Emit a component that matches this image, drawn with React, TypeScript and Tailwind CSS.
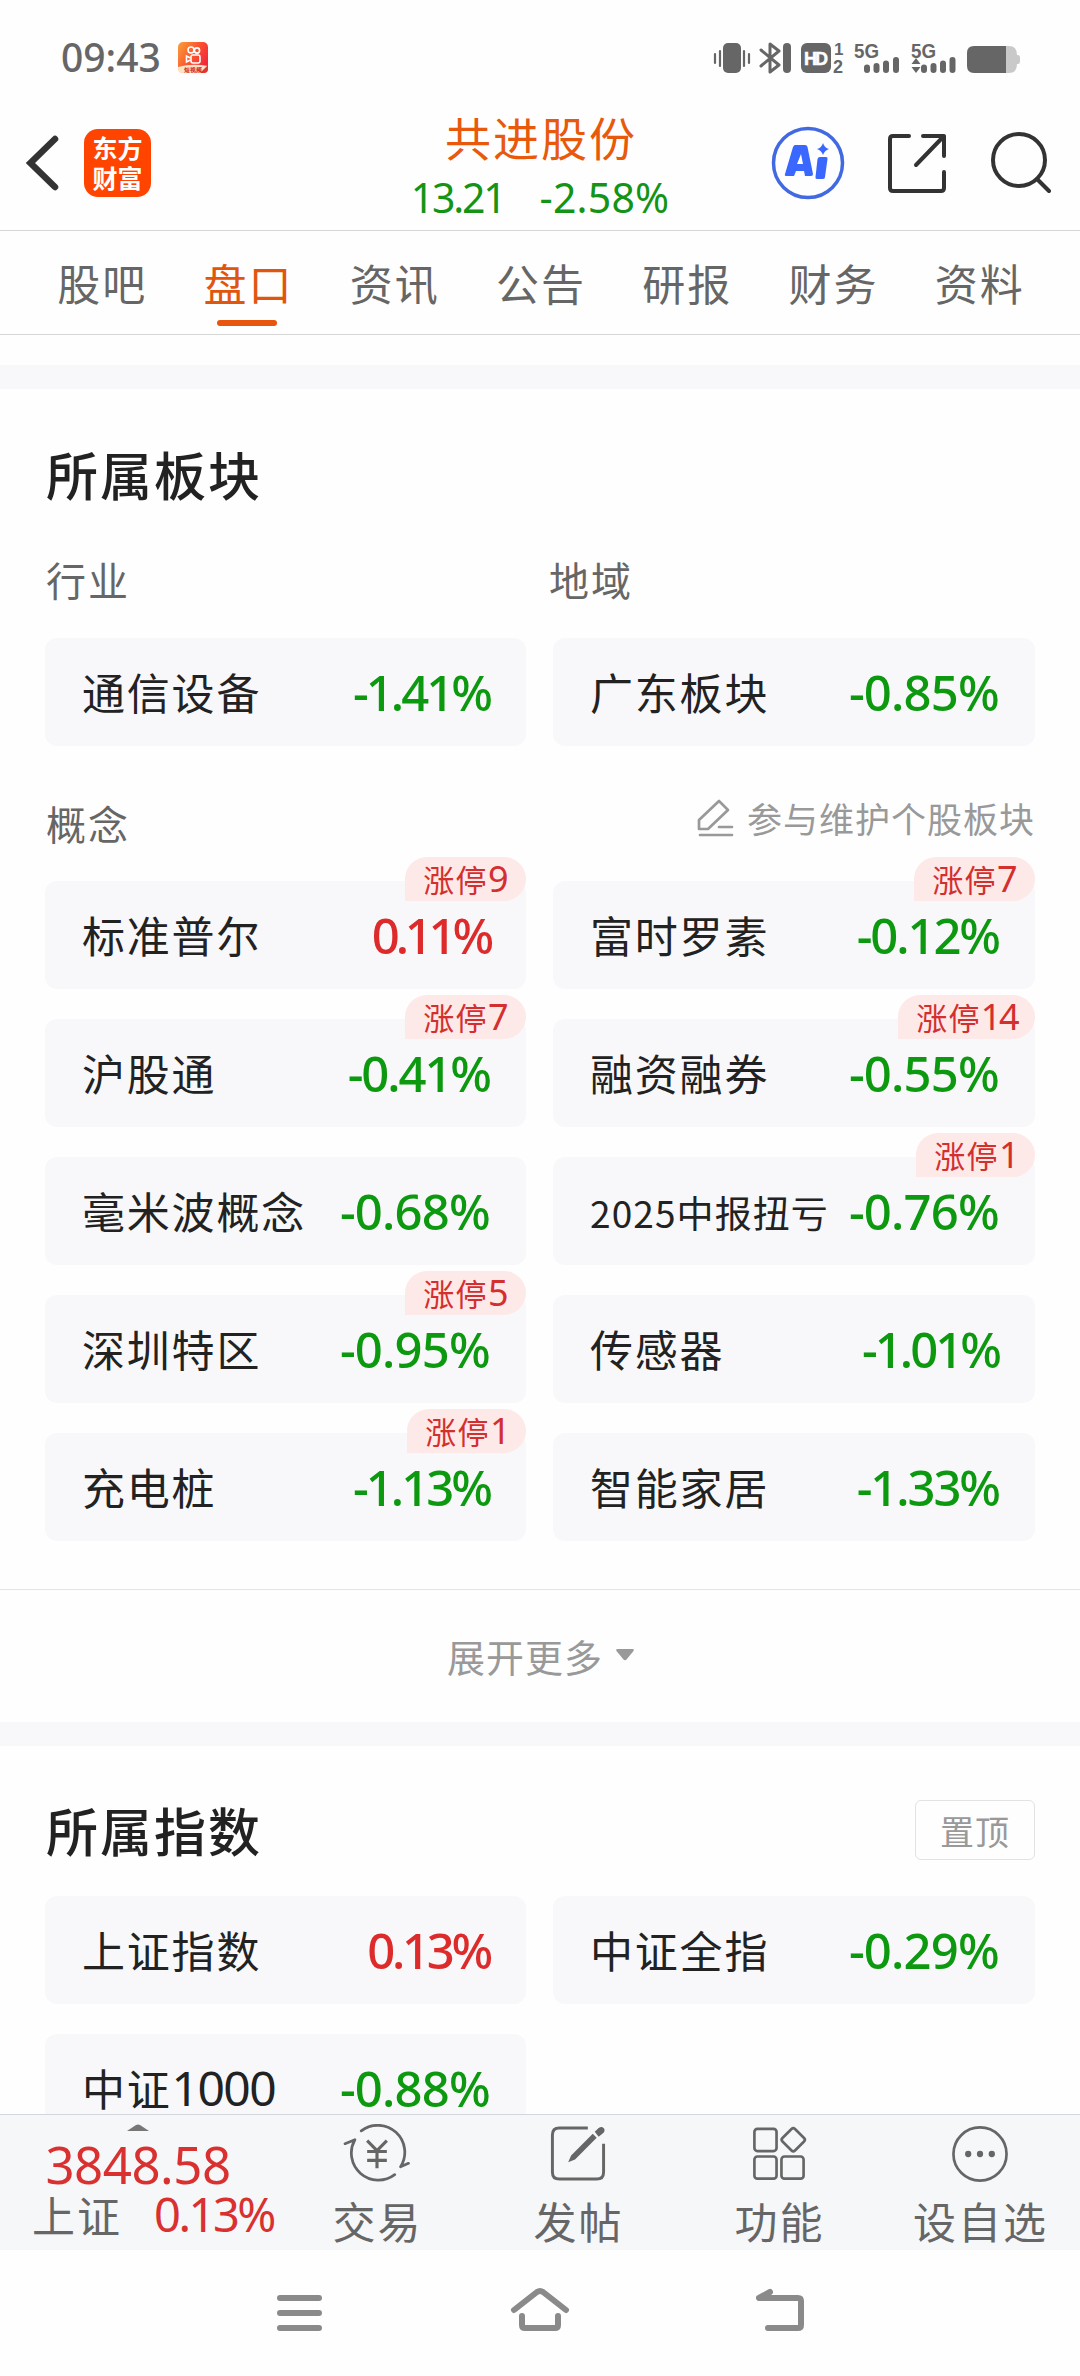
import type { ReactNode } from "react";

type Board = { name: ReactNode; value: string; badge?: string };

const industry: Board[] = [
  { name: "通信设备", value: "-1.41%" },
  { name: "广东板块", value: "-0.85%" },
];

const concepts: Board[] = [
  { name: "标准普尔", value: "0.11%", badge: "9" },
  { name: "富时罗素", value: "-0.12%", badge: "7" },
  { name: "沪股通", value: "-0.41%", badge: "7" },
  { name: "融资融券", value: "-0.55%", badge: "14" },
  { name: "毫米波概念", value: "-0.68%" },
  { name: <span className="text-[37px] tracking-[1.1px]">2025中报扭亏</span>, value: "-0.76%", badge: "1" },
  { name: "深圳特区", value: "-0.95%", badge: "5" },
  { name: "传感器", value: "-1.01%" },
  { name: "充电桩", value: "-1.13%", badge: "1" },
  { name: "智能家居", value: "-1.33%" },
];

const indexes: Board[] = [
  { name: "上证指数", value: "0.13%" },
  { name: "中证全指", value: "-0.29%" },
  { name: <>中证<span className="font-['Noto_Sans'] text-[48px] tracking-[-1.6px]">1000</span></>, value: "-0.88%" },
];

const tabs = ["股吧", "盘口", "资讯", "公告", "研报", "财务", "资料"];

// the figure 1 is narrow, so values with more of them are set tighter
const downTracking = ["tracking-[-0.8px]", "tracking-[-2.1px]", "tracking-[-3px]"];
const upTracking = ["tracking-[-1px]", "tracking-[-3.3px]", "tracking-[-4.2px]"];

export default function App() {
  return (
    <div className="flex h-[2376px] w-[1080px] flex-col overflow-hidden bg-[#fefefe] font-['Noto_Sans_CJK_SC',sans-serif] text-[#222]">
      <StatusBar />
      <Header />
      <nav className="flex h-[105px] shrink-0 border-y border-[#d6d6d6] px-7">
        {tabs.map((t) => (
          <Tab key={t} label={t} active={t === "盘口"} />
        ))}
      </nav>

      <main className="h-[1779px] shrink-0 overflow-hidden pt-[30px]">
        <div className="h-6 bg-[#f8f8fa]" />
        <section className="px-[45px]">
          <h2 className="flex h-[169px] items-center pl-[1px] text-[52px] leading-[60px] font-medium tracking-[2px]">所属板块</h2>
          <div className="grid h-[80px] grid-cols-[503px_1fr] pt-[2px] pl-[1px] text-[40px] leading-[38px] tracking-[2px] text-[#666]">
            <span>行业</span>
            <span>地域</span>
          </div>
          <BoardGrid items={industry} />
          <div className="flex h-[135px] items-center justify-between">
            <span className="pt-[19px] pl-[1px] text-[40px] tracking-[2px] text-[#666]">概念</span>
            <span className="flex items-center gap-[13px] pt-[9px] text-[35px] tracking-[1px] text-[#999]">
              <EditIcon />
              参与维护个股板块
            </span>
          </div>
          <BoardGrid items={concepts} />
        </section>
        <button className="mt-12 flex h-[133px] w-full items-center justify-center gap-3 border-t border-[#e4e4e4] pb-[2px] pl-[2px] text-[38px] tracking-[1px] text-[#999]">
          展开更多
          <svg width="20" height="14" viewBox="0 0 20 14">
            <path d="M2.5 1h15q2 0 1 2l-7 8.500q-1.500 1.500-3 0l-7-8.500q-1-2 1-2z" fill="#999" />
          </svg>
        </button>
        <div className="h-6 bg-[#f8f8fa]" />
        <section className="px-[45px]">
          <div className="flex h-[150px] items-center justify-between">
            <h2 className="pt-[18px] pl-[1px] text-[52px] font-medium tracking-[2px]">所属指数</h2>
            <span className="mt-[18px] flex h-[60px] w-[120px] items-center justify-center rounded-[6px] border border-[#e2e2e2] text-[34px] tracking-[1px] text-[#999]">
              置顶
            </span>
          </div>
          <BoardGrid items={indexes} />
        </section>
      </main>

      <BottomBar />
      <SystemNav />
    </div>
  );
}

function Tab({ label, active }: { label: string; active: boolean }) {
  return (
    <div className={`flex flex-1 flex-col items-center text-[43px] leading-[60px] tracking-[2px] ${active ? "text-[#e0560f]" : "text-[#666]"}`}>
      <span className="mt-[21px] pl-[2px]">{label}</span>
      {active && <span className="mt-2 h-1.5 w-[60px] rounded-full bg-[#e8550c]" />}
    </div>
  );
}

function BoardGrid({ items }: { items: Board[] }) {
  return (
    <div className="grid grid-cols-[481px_482px] gap-x-[27px] gap-y-[30px]">
      {items.map((b, i) => (
        <BoardCard key={i} board={b} />
      ))}
    </div>
  );
}

function BoardCard({ board }: { board: Board }) {
  const ones = board.value.split("1").length - 1;
  const down = board.value.startsWith("-");
  const style = down ? `text-[#0c990f] ${downTracking[ones]}` : `text-[#dd2b2b] ${upTracking[ones]}`;
  return (
    <div className="relative flex h-[108px] items-center justify-between rounded-xl bg-[#f8f8fa] pr-[36px] pl-[37px]">
      <span className="pb-[2px] text-[43px] leading-[60px] tracking-[1.8px] whitespace-nowrap">{board.name}</span>
      <span className={`font-['Noto_Sans'] text-[49px] leading-[60px] font-medium whitespace-nowrap ${style}`}>{board.value}</span>
      {board.badge && (
        <span className="absolute -top-6 right-0 flex h-11 items-center rounded-[22px] rounded-bl-none bg-[#fde9e8] px-[18px] text-[31px] tracking-[1.3px] text-[#d42f2f]">
          涨停
          <span className={`font-['Noto_Sans'] text-[36px] ${board.badge.includes("1") ? "tracking-[-2.5px]" : "tracking-[-0.5px]"}`}>
            {board.badge}
          </span>
        </span>
      )}
    </div>
  );
}

function StatusBar() {
  return (
    <div className="flex h-[115px] shrink-0 items-center justify-between pr-[60px] pl-[61px]">
      <div className="flex items-center gap-[17px] font-['Noto_Sans'] text-[39px] font-medium text-[#666]">
        09:43
        <svg width="30" height="31" viewBox="0 0 30 31">
          <defs>
            <linearGradient id="ks" x1="0" y1="0" x2="1" y2="0.6">
              <stop offset="0" stopColor="#f9a03a" />
              <stop offset="0.6" stopColor="#f9502f" />
              <stop offset="1" stopColor="#f5263c" />
            </linearGradient>
          </defs>
          <rect width="30" height="31" rx="5" fill="url(#ks)" />
          <path d="M0 25q14-4 30-1l-5 7H5q-5 0-5-5z" fill="#fde3c8" />
          <g fill="none" stroke="#fff" strokeWidth="1.600">
            <circle cx="13" cy="8" r="3" />
            <circle cx="19" cy="8.500" r="2.600" />
            <rect x="13" y="13" width="9" height="8" rx="2" />
            <path d="M12.500 16l-4-2v6l4-2" />
          </g>
          <path d="M30 23l-8 8h4q4 0 4-4z" fill="#e8352c" />
          <text x="15" y="30" textAnchor="middle" fontSize="6" fontWeight="700" fill="#d02a20">短视频</text>
        </svg>
      </div>
      <svg width="306" height="32" viewBox="714 42 306 32" fill="#666" className="overflow-visible font-['Liberation_Sans']">
        <rect x="723" y="43" width="18" height="30" rx="5" />
        <path d="M715 54v9M720 51v15M744 51v15M749 54v9" stroke="#666" strokeWidth="2.200" strokeLinecap="round" />
        <path d="M761 50l18 15-9 7V44l9 7-18 15" fill="none" stroke="#666" strokeWidth="3" strokeLinejoin="round" strokeLinecap="round" />
        <rect x="783" y="43" width="8" height="30" rx="4" />
        <rect x="801" y="43" width="30" height="30" rx="6" />
        <text x="816" y="64.500" textAnchor="middle" fontSize="18" fontWeight="700" fill="#fff" stroke="#fff" strokeWidth="0.5" textLength="24">HD</text>
        <text x="834" y="55" fontSize="17" fontWeight="700">1</text>
        <text x="833" y="73" fontSize="18" fontWeight="700">2</text>
        <text x="854" y="57.500" fontSize="20" fontWeight="700" textLength="25" lengthAdjust="spacingAndGlyphs">5G</text>
        <path d="M867 67.500v2.500M876.500 66v4M886 63.500v6.500M896 60v10" stroke="#666" strokeWidth="6" strokeLinecap="round" />
        <text x="911" y="57.500" fontSize="20" fontWeight="700" textLength="25" lengthAdjust="spacingAndGlyphs">5G</text>
        <path d="M911.500 64l4.500-6 4.500 6zM911.500 67l4.500 6 4.500-6z" />
        <path d="M924 67.500v2.500M933.500 66v4M943 63.500v6.500M952.500 60v10" stroke="#666" strokeWidth="6" strokeLinecap="round" />
        <path d="M1006 46h3q8 0 8 9h1q2 0 2 2.500v4q0 2.500-2 2.500h-1q0 9-8 9h-3z" fill="#c9c9c9" />
        <path d="M974 46h32v27h-32q-7 0-7-7V53q0-7 7-7z" />
      </svg>
    </div>
  );
}

function Header() {
  return (
    <header className="grid h-[115px] shrink-0 grid-cols-[1fr_300px_1fr]">
      <div className="flex items-start pt-[14px] pl-[26px]">
        <svg width="34" height="68" viewBox="0 0 34 68" fill="none" stroke="#333" strokeWidth="6.500" strokeLinecap="round">
          <path d="M29 10L4.500 34 29 58" />
        </svg>
        <div className="ml-6 flex h-[68px] w-[67px] flex-col items-center justify-center rounded-[14px] bg-[#ff4400] pb-[2px] text-[25px] leading-[30px] font-bold text-white">
          <span>东方</span>
          <span>财富</span>
        </div>
      </div>
      <div className="flex flex-col items-center">
        <h1 className="-mt-1 pl-[2px] text-[46px] leading-[50px] tracking-[2px] whitespace-nowrap text-[#e8590c]">共进股份</h1>
        <div className="mt-1 flex gap-[35px] font-['Noto_Sans'] text-[41px] leading-[64px] text-[#149414]">
          <span className="tracking-[-2.200px]">13.21</span>
          <span className="tracking-[0.200px]">-2.58%</span>
        </div>
      </div>
      <div className="flex justify-end gap-[42px] pt-[11px] pr-[29px]">
        <svg width="74" height="74" viewBox="0 0 74 74" className="shrink-0">
          <circle cx="37" cy="37" r="34.500" fill="none" stroke="#4169e1" strokeWidth="3.500" />
          <path d="M24 19h10q2 0 2.500 2L42 48q0 2-2 2h-6l-1-5h-8l-2 5h-7q-3 0-2-2l8-27q1-2 2-2zM30 28l-4 10h6z" fill="#3a68ff" fillRule="evenodd" />
          <path d="M49 31h6q2 0 1.500 2L54 51q0 2-2 2h-6q-2 0-1.500-2l2-18q.5-2 2.500-2z" fill="#3a68ff" />
          <path d="M52 17q1.500 5 6 6-4.500 1.500-6 6-1.500-4.500-6-6 4.500-1 6-6z" fill="#3a68ff" />
        </svg>
        <svg width="60" height="74" viewBox="0 0 60 74" className="shrink-0" fill="none" stroke="#333" strokeWidth="4" strokeLinecap="round" strokeLinejoin="round">
          <path d="M22 10H6q-3 0-3 3v49q0 3 3 3h48q3 0 3-3V46M36 10h21v20M57 10L29 39" />
        </svg>
        <svg width="62" height="74" viewBox="0 0 62 74" className="shrink-0" fill="none" stroke="#333" strokeWidth="4" strokeLinecap="round">
          <circle cx="30" cy="34" r="26" />
          <path d="M48 53l12 12" />
        </svg>
      </div>
    </header>
  );
}

function EditIcon() {
  return (
    <svg width="37" height="38" viewBox="0 0 37 38" fill="none" stroke="#999" strokeWidth="2.700" strokeLinecap="round" strokeLinejoin="round">
      <path d="M2 30V21L22 2l9 9-20 19zM22 28h13M3 36h32" />
    </svg>
  );
}

function BottomBar() {
  return (
    <footer className="flex h-[136px] shrink-0 border-t border-[#d3d6dc] bg-[#f6f7f9] text-[#666]">
      <div className="flex w-[276px] flex-col items-center">
        <svg width="22" height="7" viewBox="0 0 22 7" className="mt-[9px]">
          <path d="M0 7l9-6q2-1 4 0l9 6z" fill="#777" />
        </svg>
        <span className="mt-[6px] font-['Noto_Sans'] text-[51px] leading-[55px] tracking-[-0.500px] text-[#d93030]">3848.58</span>
        <div className="flex items-center gap-[32px] pl-[30px] text-[43px] leading-[44px] tracking-[2px] whitespace-nowrap">
          上证
          <span className="font-['Noto_Sans'] text-[47px] tracking-[-2.500px] text-[#d93030]">0.13%</span>
        </div>
      </div>
      <BarItem label="交易">
        <g fill="none" stroke="#666" strokeWidth="2.800" strokeLinecap="round" strokeLinejoin="round">
          <path d="M18 7A27.500 27.500 0 0 1 58 43.500L66 40M52 51.500A27.500 27.500 0 0 1 11.500 16L1.500 20" />
          <path d="M24 17l10 10 10-10M34 27v18M24 28h20M24 37h20" strokeWidth="3.200" strokeLinecap="butt" />
        </g>
      </BarItem>
      <BarItem label="发帖">
        <path d="M44 4H15q-7 0-7 7v38q0 7 7 7h38q7 0 7-7V20" fill="none" stroke="#666" strokeWidth="3" />
        <path d="M24 39l3-7 22-22 4 4-22 22zM51 8l4-4q3-2 5 0t0 5l-5 4z" fill="#666" />
      </BarItem>
      <BarItem label="功能">
        <g fill="none" stroke="#666" strokeWidth="2.700">
          <rect x="9" y="5" width="22.500" height="22.500" rx="3" />
          <rect x="9" y="33" width="22.500" height="22.500" rx="3" />
          <rect x="36.500" y="33" width="22.500" height="22.500" rx="3" />
          <rect x="39.500" y="7" width="18" height="18" rx="2.500" transform="rotate(45 48.500 16)" />
        </g>
      </BarItem>
      <BarItem label="设自选">
        <circle cx="34" cy="30.500" r="27" fill="none" stroke="#666" strokeWidth="2.700" />
        <g fill="#666">
          <circle cx="22" cy="30.500" r="3.200" />
          <circle cx="34" cy="30.500" r="3.200" />
          <circle cx="46" cy="30.500" r="3.200" />
        </g>
      </BarItem>
    </footer>
  );
}

function BarItem({ label, children }: { label: string; children: ReactNode }) {
  return (
    <div className="flex flex-1 flex-col items-center pt-[9px]">
      <svg width="68" height="61" viewBox="0 0 68 61">
        {children}
      </svg>
      <span className="mt-[6px] pl-[2px] text-[43px] leading-[60px] tracking-[2px]">{label}</span>
    </div>
  );
}

function SystemNav() {
  return (
    <div className="flex h-[126px] shrink-0 justify-center gap-[180px] pt-[34px]">
      <svg width="60" height="50" viewBox="0 0 60 50" stroke="#8a8a8a" strokeWidth="6" strokeLinecap="round">
        <path d="M10 14h39M10 29h39M10 44h39" />
      </svg>
      <svg width="60" height="50" viewBox="0 0 60 50" fill="none" stroke="#8a8a8a" strokeWidth="6" strokeLinecap="round" strokeLinejoin="round">
        <path d="M4 26L27 8q3-2 6 0l23 18M12 32v9q0 3 3 3h30q3 0 3-3v-9" />
      </svg>
      <svg width="60" height="50" viewBox="0 0 60 50" fill="none" stroke="#8a8a8a" strokeWidth="6" strokeLinecap="round" strokeLinejoin="round">
        <path d="M20 8L9 14h39q3 0 3 3v24q0 3-3 3H18" />
      </svg>
    </div>
  );
}
